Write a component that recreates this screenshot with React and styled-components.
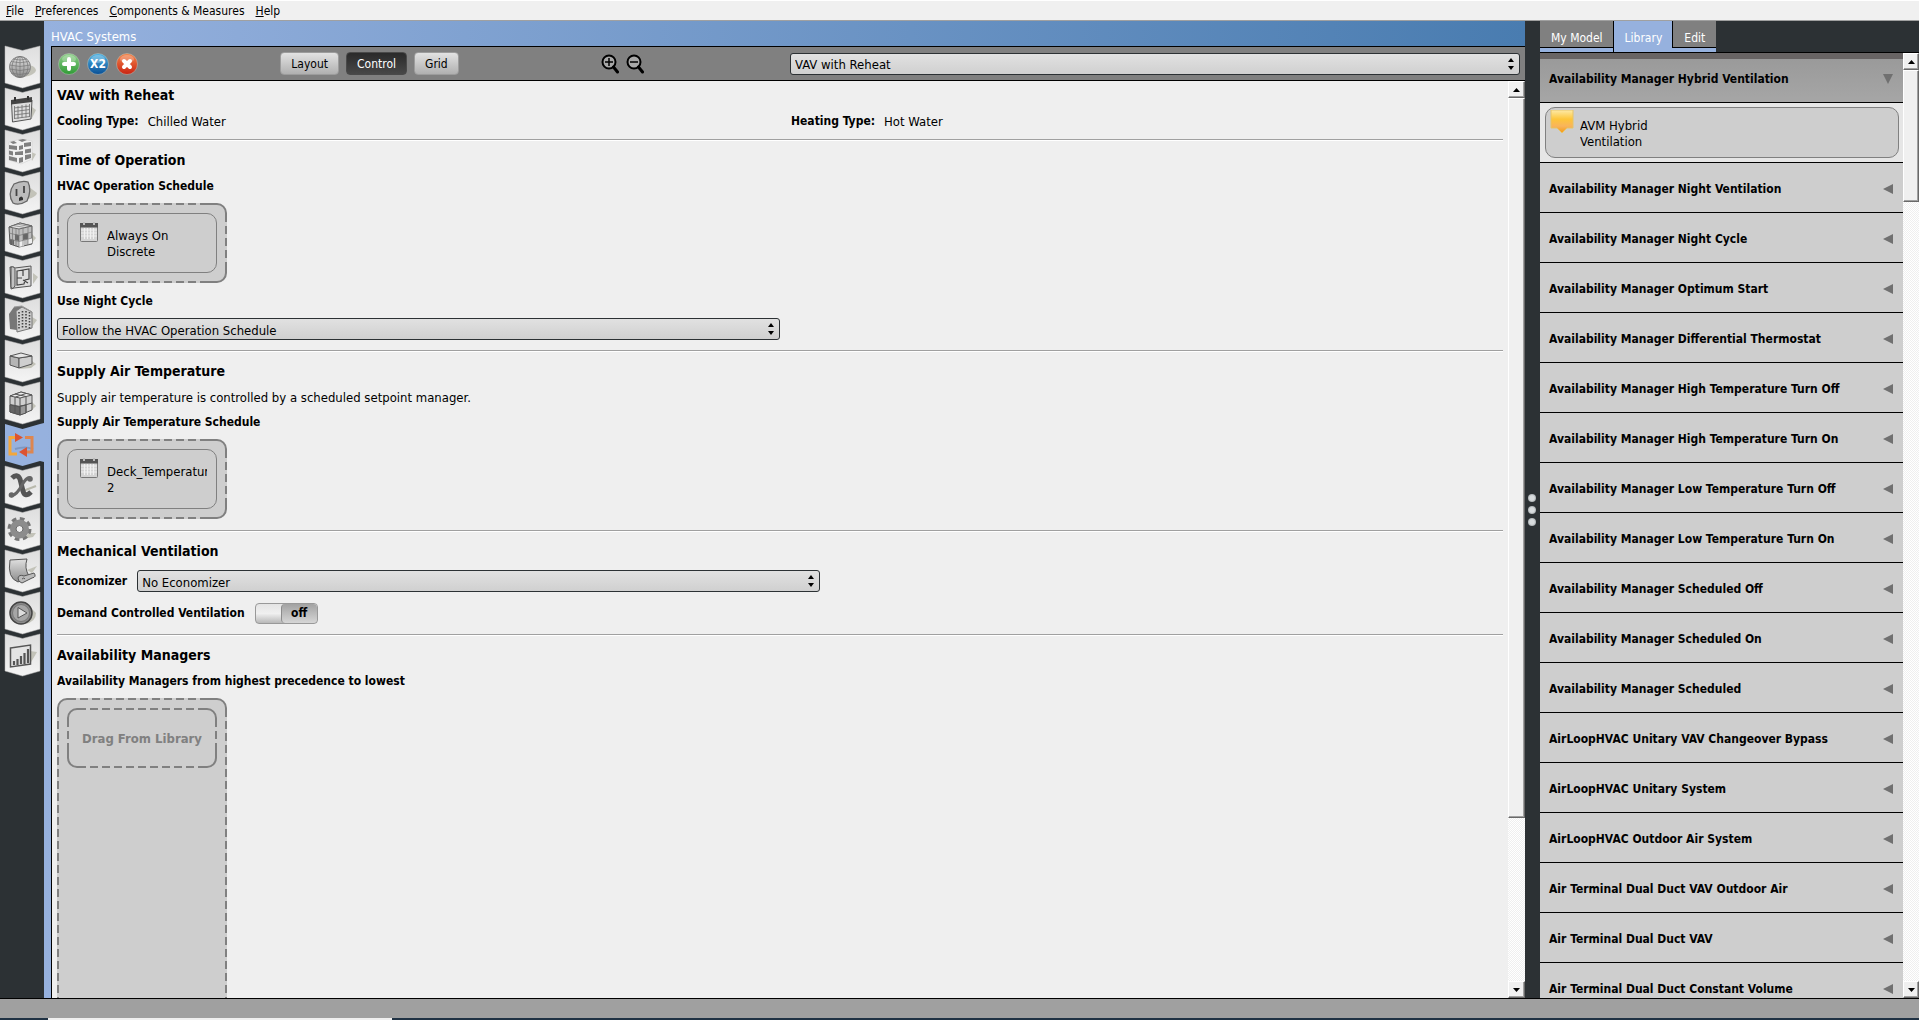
import React, { useState } from 'react';
import styled, { createGlobalStyle, css } from 'styled-components';

const GlobalStyle = createGlobalStyle`
  * {
    box-sizing: border-box;
  }

  body {
    margin: 0;
    background: #f0f0f0;
  }

  body, button, select, input {
    font-family: "DejaVu Sans Condensed", "DejaVu Sans", sans-serif;
    font-size: 12px;
    color: #000;
  }
`;

const Window = styled.div`
  height: 100vh;
  display: flex;
  flex-direction: column;
  overflow: hidden;
`;

const MenuBar = styled.nav`
  flex: none;
  height: 21px;
  display: flex;
  align-items: center;
  gap: 11px;
  padding: 0 6px;
  background: #f0f0f0;
  border-top: 1px solid #fff;
  border-bottom: 1px solid #a0a0a0;
`;

const MenuItem = styled.a`
  display: inline-block;
  color: #000;
  text-decoration: none;
  line-height: 16px;

  &::first-letter {
    text-decoration: underline;
  }
`;

const Workspace = styled.div`
  flex: 1;
  min-height: 0;
  display: flex;
  background: #2c3134;
  border-bottom: 1px solid #000;
`;

/* ---- left tabs ---- */

const Rail = styled.nav`
  flex: none;
  width: 44px;
  padding: 25px 0 0 5px;
  display: flex;
  flex-direction: column;
`;

const RailTab = styled.button`
  width: 39px;
  height: 42px;
  padding: 0;
  border: none;
  background: none;
  cursor: pointer;

  svg {
    display: block;
    overflow: visible;
  }
`;

/* ---- main panel ---- */

const Main = styled.main`
  flex: 1;
  min-width: 0;
  display: flex;
  flex-direction: column;
  padding-left: 7px;
  background: linear-gradient(90deg, #96b1de, #497cb0);
`;

const MainTitle = styled.h1`
  margin: 0;
  height: 25px;
  padding-top: 8px;
  font-size: 13px;
  font-weight: normal;
  line-height: 16px;
  color: #fff;
`;

const Frame = styled.div`
  flex: 1;
  min-height: 0;
  display: flex;
  flex-direction: column;
  border: 1px solid #000;
  border-width: 1px 0 0 1px;
`;

const Toolbar = styled.div`
  flex: none;
  height: 34px;
  display: grid;
  grid-template-columns: 1fr 1fr;
  align-items: center;
  gap: 2px;
  padding: 0 5px 0 6px;
  background: #808080;
  border-bottom: 1px solid #000;
`;

const ToolbarHalf = styled.div`
  display: flex;
  justify-content: space-between;
  padding-right: 144px;
`;

const ToolbarGroup = styled.div`
  display: flex;
  align-items: center;
  gap: 7px;
`;

const IconButton = styled.button`
  padding: 0;
  border: none;
  background: none;
  cursor: pointer;

  svg {
    display: block;
  }
`;

const ViewButton = styled.button`
  height: 23px;
  padding: 0 10px;
  border: 1px solid #9c9c9c;
  border-radius: 4px;
  background: linear-gradient(#e2e2e2, #b0b0b0);
  cursor: pointer;

  ${(props) => props.$active && css`
    color: #fff;
    border-color: #4a4a4a;
    background: linear-gradient(#2a2a2a, #484848);
  `}
`;

const SelectBox = styled.div`
  position: relative;
  flex: ${(props) => (props.$grow ? '1 1 0' : 'none')};
  width: ${(props) => props.$width || 'auto'};

  select {
    display: block;
    width: 100%;
    height: 22px;
    padding: 2px 20px 0 4px;
    font-size: 13px;
    appearance: none;
    border: 1px solid #2c3134;
    border-radius: 3px;
    background: linear-gradient(#e1e1e1, #d0d0d0);
  }

  svg {
    position: absolute;
    right: 6px;
    top: 5px;
    pointer-events: none;
  }
`;

const ScrollArea = styled.div`
  flex: 1;
  min-height: 0;
  display: flex;
  background: #efefef;
`;

const Content = styled.div`
  flex: 1;
  min-width: 0;
  overflow: hidden;
  padding: 0 5px;
`;

const Section = styled.section`
  display: flex;
  flex-direction: column;
  gap: 9px;
  padding: 5px 0 10px;

  & + & {
    border-top: 1px solid #a0a0a0;
    box-shadow: inset 0 1px #fff;
    padding-top: 11px;
  }
`;

const Heading = styled.h2`
  margin: 0;
  padding-top: 1px;
  font-size: 14px;
  line-height: 17px;
`;

const FieldLabel = styled.label`
  padding-top: 1px;
  font-weight: bold;
  line-height: 15px;
`;

const Text = styled.p`
  margin: 0;
  padding-top: 1px;
  font-size: 13px;
  line-height: 15px;
`;

const HalfColumns = styled.div`
  display: grid;
  grid-template-columns: 50% 1fr;
  column-gap: 11px;
  padding-top: 1px;
  line-height: 15px;
`;

const Pair = styled.div`
  display: flex;
  gap: 9px;

  span {
    font-size: 13px;
  }
`;

const FieldRow = styled.div`
  display: flex;
  align-items: center;
  gap: 10px;
  width: ${(props) => props.$width || 'auto'};
  height: ${(props) => props.$height}px;
`;

/* 2px outline with 8px dashes; the corners stay solid */
const dashed = css`
  position: relative;
  border: 2px solid #808080;

  &::after {
    content: '';
    position: absolute;
    inset: -2px;
    pointer-events: none;
    background:
      repeating-linear-gradient(90deg, #cecece 0 4px, transparent 4px 12px) 19px 0 / calc(100% - 38px) 2px no-repeat,
      repeating-linear-gradient(90deg, #cecece 0 4px, transparent 4px 12px) 19px 100% / calc(100% - 38px) 2px no-repeat,
      repeating-linear-gradient(#cecece 0 4px, transparent 4px 12px) 0 19px / 2px calc(100% - 38px) no-repeat,
      repeating-linear-gradient(#cecece 0 4px, transparent 4px 12px) 100% 19px / 2px calc(100% - 38px) no-repeat;
  }
`;

const DropZone = styled.div`
  ${dashed}
  width: 170px;
  min-height: ${(props) => (props.$tall ? 400 : 80)}px;
  margin-bottom: 1px;
  padding: 8px;
  border-radius: 10px;
  background: #cecece;
`;

const Card = styled.div`
  display: flex;
  height: 60px;
  padding: 8px 9px 0 12px;
  gap: 9px;
  border: 1px solid #808080;
  border-radius: 10px;
  background: #cecece;

  svg {
    flex: none;
  }
`;

const CardText = styled.span`
  flex: 1;
  overflow: hidden;
  padding-top: 6px;
  font-size: 13px;
  line-height: 16px;
`;

const EmptySlot = styled.div`
  ${dashed}
  display: flex;
  align-items: center;
  justify-content: center;
  height: 60px;
  border-radius: 10px;
  font-size: 13px;
  font-weight: bold;
  color: #808080;
`;

const Toggle = styled.label`
  position: relative;
  display: flex;
  justify-content: ${(props) => (props.$on ? 'flex-start' : 'flex-end')};
  width: 63px;
  height: 21px;
  border: 1px solid #999;
  border-radius: 4px;
  background: linear-gradient(#e4e4e4, #f0f0f0 50%, #b8b8b8);

  input {
    position: absolute;
    inset: 0;
    margin: 0;
    opacity: 0;
  }

  span {
    width: 36px;
    line-height: 18px;
    text-align: center;
    font-weight: bold;
    border-left: 1px solid #8c8c8c;
    border-radius: 4px;
    background: linear-gradient(#a2a2a2, #d6d6d6);
  }
`;

/* ---- scroll bars ---- */

const Bar = styled.div`
  flex: none;
  width: ${(props) => props.$width}px;
  display: flex;
  flex-direction: column;
  background: conic-gradient(#fff 25%, #efefef 0 50%, #fff 0 75%, #efefef 0) 0 0 / 2px 2px;
`;

const raised = css`
  border: 1px solid;
  border-color: #fff #696969 #696969 #fff;
  box-shadow: inset -1px -1px #a0a0a0;
  background: #f0f0f0;
`;

const BarButton = styled.button`
  ${raised}
  flex: none;
  height: 17px;
  padding: 0;
  display: flex;
  align-items: center;
  justify-content: center;
`;

const BarTrack = styled.div`
  flex: 1;
`;

const BarThumb = styled.div`
  ${raised}
  height: ${(props) => props.$size}%;
`;

/* ---- splitter and right panel ---- */

const Splitter = styled.div`
  flex: none;
  width: 15px;
  display: flex;
  flex-direction: column;
  align-items: center;
  justify-content: center;
  gap: 4px;
  padding-right: 1px;

  i {
    width: 8px;
    height: 8px;
    border-radius: 50%;
    background: radial-gradient(#d8dcde 40%, #7c8286);
  }
`;

const Side = styled.aside`
  flex: none;
  width: 379px;
  display: flex;
  flex-direction: column;
`;

const SideTabs = styled.div`
  flex: none;
  height: 32px;
  display: flex;
  border-bottom: 1px solid #000;
`;

const SideTab = styled.button`
  height: 31px;
  padding: 6px 11px 0;
  border: none;
  border-bottom: 4px solid #96b1de;
  background: ${(props) => (props.$active ? '#96b1de' : '#808080')};
  box-shadow: ${(props) => (props.$active ? 'inset -1px 0 #000, -1px 0 #000' : 'inset 0 -1px #000')};
  color: #fff;
`;

const List = styled.ul`
  flex: 1;
  min-width: 0;
  overflow: hidden;
  margin: 0;
  padding: 0;
  list-style: none;
  background: #cecece;
`;

const ListHeader = styled.button`
  width: 100%;
  height: 50px;
  display: flex;
  align-items: center;
  justify-content: space-between;
  padding: 3px 10px 0 9px;
  border: none;
  border-bottom: 1px solid #000;
  background: #cecece;
  font-weight: bold;
  text-align: left;

  ${(props) => props.$open && css`
    border-top: 6px solid #686464;
    background: linear-gradient(#9a9a9a, #a6a6a6);
    padding-top: 0;
    padding-bottom: 4px;
  `}
`;

const OpenBody = styled.div`
  height: 60px;
  padding: 4px 4px 5px 5px;
  background: #e6e6e6;
  border-bottom: 1px solid #000;

  ${Card} {
    height: 51px;
    padding: 2px 4px 0;
    gap: 6px;
  }

  ${CardText} {
    padding-top: 8px;
  }
`;

/* ---- bottom ---- */

const StatusBar = styled.footer`
  flex: none;
  height: 21px;
  background: #a0a0a0;
  border-bottom: 2px solid #203244;
`;

const TaskStrip = styled.div`
  width: 344px;
  height: 2px;
  margin: 19px 0 0 48px;
  background: #efefef;
`;

const Ink = ({ children, fill = 'none', width = 1 }) => (
  <g fill={fill} stroke="#555" strokeWidth={width} strokeLinejoin="round">{children}</g>
);

const Shade = ({ d }) => <path d={d} fill="#b9b9ac" opacity="0.8" />;

const icons = {
  Site: (
    <>
      <Shade d="M18 31 C26 30 31 27 31 24 C30 21 27 19 25 20 Z" />
      <circle cx="15" cy="21" r="10.5" fill="url(#metal)" stroke="#888" />
      <g fill="none" stroke="#777" strokeWidth="0.7">
        <ellipse cx="15" cy="21" rx="4" ry="10.5" />
        <ellipse cx="15" cy="21" rx="8" ry="10.5" />
        <path d="M15 10.5V31.5M6 15.5Q15 18 24 15.5M4.500 19Q15 22 25.500 19M4.500 23Q15 26 25.500 23M6 27Q15 30 24 27M8 13Q15 15 22 13" />
      </g>
    </>
  ),
  Schedules: (
    <>
      <Shade d="M27 19L31 22L27 30Z" />
      <path d="M6.500 14L27 12L26 31L7.500 34Z" fill="#ddd" stroke="#555" />
      <path d="M6 12L27 9V14L6 16.500Z" fill="#444" />
      <path d="M10 9v4M23 8v4" stroke="#333" strokeWidth="2" />
      <path d="M9 20L25 18M9 23.500L25 21.500M9 27L25 25M9 30.500L25 28.500M9.500 18v13M13 18v13M17 17v13M21 16.500v13M24.500 16v13" stroke="#777" strokeWidth="0.9" />
    </>
  ),
  Constructions: (
    <>
      <Shade d="M26 22L31 24L27 31Z" />
      <path d="M4 12L16 9L27 11V29L16 34L4 30Z" fill="#f2f2f2" stroke="#ccc" strokeWidth="0.5" />
      <g fill="#808080">
        <path d="M5 12l4-1 3 2-4 1zM13 10l5-1 4 1-5 2zM19 13l7-1v4l-7 1zM4 15l8 1v4l-8-1zM14 16l4-1v4l-4 1zM4 20.500l4 1v4l-4-1zM10 22l8-1v4l-8 0zM20 19.500l6-1v4l-6 1zM4 26l8 2v4l-8-2zM14 28l4-1v5l-4 1zM20 25l6-1v4l-6 2z" />
      </g>
    </>
  ),
  Loads: (
    <>
      <Shade d="M24 15L32 21Q31 25 23 27Z" />
      <path d="M9 12Q17 8 23 10Q27 18 22 29Q14 34 8 31Q2 22 9 12Z" fill="#bcbcbc" stroke="#666" strokeWidth="1.3" />
      <path d="M11.500 17v7M19 14v7" stroke="#444" strokeWidth="1.800" />
      <path d="M14 29v-3q2.500-3 4 0v2z" fill="#333" />
    </>
  ),
  'Space Types': (
    <>
      <Shade d="M26 19L31 24L26 30Z" />
      <path d="M4 13L15 9L27 12V30L14 33L5 30Z" fill="#bdbdbd" stroke="#555" />
      <path d="M4 13L14 15L27 12L15 9Z" fill="#e4e4e4" stroke="#666" />
      <path d="M18 20l5-1v6l-5 1zM5 25l4 1v5l-4-1zM10 20l4 1v6l-4-1z" fill="#666" />
      <path d="M23 25l4-1v5l-4 1zM14 27l5-1v6l-5 1z" fill="#eee" />
      <path d="M14 15V33M4 19L14 21.500L27 18M4 25L14 27.500L27 24M7.500 14v17M11 14.500v18M18 14v18M23 13v18M8 11.500l12 2M12 10l12 2.500" fill="none" stroke="#777" strokeWidth="0.7" />
    </>
  ),
  Geometry: (
    <>
      <Shade d="M28 17L33 21L28 28Z" />
      <path d="M5 11h3l2 1 16-2v20L9 32l-3 1z" fill="#ddd" stroke="#555" />
      <path d="M6 11q4-1 4 3v16q-3 4-4 1z" fill="#c2c2c2" stroke="#555" />
      <path d="M12 15L24 13V23L20 24L19 28L12 29ZM12 22h5M18 14v6M18 24l5 3" fill="none" stroke="#444" strokeWidth="1.200" />
    </>
  ),
  Facility: (
    <>
      <Shade d="M27 19L32 22L27 29Z" />
      <path d="M4 16L9 9L17 8L18 33L5 31Z" fill="#777" />
      <path d="M11 13L17 9L27 14V30L12 34Z" fill="#cfcfcf" stroke="#777" />
      <path d="M14 14v18M17.500 13v18M21 13v18M24.500 14v17" stroke="#444" strokeWidth="1.600" strokeDasharray="1.500 1.500" />
      <path d="M9 9L17 8L27 14" fill="none" stroke="#999" />
    </>
  ),
  Spaces: (
    <>
      <Shade d="M27 21L31 24L26 28L14 29Z" />
      <Ink fill="#b5b5b5">
        <path d="M5 16L14 18V28L5 25Z" />
        <path d="M14 18L27 16V24L14 28Z" fill="#cfcfcf" />
        <path d="M5 16L16 13L27 16L14 18Z" fill="#e6e6e6" />
      </Ink>
    </>
  ),
  'Thermal Zones': (
    <>
      <Shade d="M27 20L31 24L26 29Z" />
      <Ink fill="#cfcfcf">
        <path d="M5 14L16 10L27 13V28L15 33L5 30Z" />
        <path d="M5 14L15 16L27 13L16 10Z" fill="#ececec" />
        <path d="M5 23L15 25V33L5 30Z" fill="#666" />
        <path d="M15 24L21 23V31L15 33Z" fill="#999" />
        <path d="M15 16V33M10 15V31M21 14.500V31M5 22.500L15 24.500L27 21M10 12L21 14.500M10.500 15L21 11.500" fill="none" />
      </Ink>
    </>
  ),
  'HVAC Systems': (
    <>
      <path d="M10 25Q20 22 28 25" fill="none" stroke="#7e98c2" strokeWidth="2" />
      <path d="M12 30H5V13.500H11" fill="none" stroke="#f2a73c" strokeWidth="3" />
      <path d="M20 13.500H27V28H22" fill="none" stroke="#dd8650" strokeWidth="3" />
      <path d="M10 9L18 13.500L10 18ZM22 23L14 28L22 33Z" fill="#dc5330" />
    </>
  ),
  'Output Variables': (
    <>
      <path d="M18 25L31 20" stroke="#b9b9ac" strokeWidth="2" />
      <path d="M7 12Q12 7 15 13L18 25Q20 32 26 26" fill="none" stroke="#555" strokeWidth="5" />
      <path d="M26 12Q22 10 17 19Q12 29 6 30" fill="none" stroke="#666" strokeWidth="3" />
      <circle cx="25" cy="13" r="2.800" fill="#666" />
      <circle cx="6.500" cy="29" r="2.800" fill="#666" />
    </>
  ),
  'Simulation Settings': (
    <>
      <Shade d="M18 31L24 25L31 25L28 29Z" />
      <circle cx="14.500" cy="21" r="10" fill="none" stroke="#777" strokeWidth="4" strokeDasharray="4.500 3.354" />
      <circle cx="14.500" cy="21" r="6.500" fill="none" stroke="#8c8c8c" strokeWidth="6" />
      <circle cx="14.500" cy="21" r="3.500" fill="#f0f0f0" stroke="#666" />
    </>
  ),
  Measures: (
    <>
      <Shade d="M22 20L32 16L27 23Z" />
      <path d="M5 10L22 9Q19 18 24 26L13 32Q2 28 5 10Z" fill="url(#metal)" stroke="#555" />
      <path d="M13 28Q14 24 19 26L29 23Q32 27 27 28L17 33Q13 32 13 28ZM17 29q2-2 3 0" fill="#bbb" stroke="#555" />
    </>
  ),
  'Run Simulation': (
    <>
      <Shade d="M20 32Q31 30 31 21L27 17Z" />
      <circle cx="16" cy="21" r="11" fill="#8a8a8a" stroke="#444" strokeWidth="1.500" />
      <circle cx="16" cy="21" r="8.500" fill="#a6a6a6" stroke="#777" />
      <path d="M13 15.500L22 21L13 26Z" fill="#ddd" stroke="#555" />
    </>
  ),
  'Results Summary': (
    <>
      <Shade d="M25 17L32 18L25 30Z" />
      <path d="M5.500 14L25.500 11V30L5.500 33Z" fill="#e4e4e4" stroke="#555" strokeWidth="1.500" />
      <path d="M9 31v-4M12.500 31v-6M16 30v-8M19.500 30v-11M23 29v-14" stroke="#555" strokeWidth="2.200" />
    </>
  ),
};

const libraryGroups = [
  'Availability Manager Night Ventilation',
  'Availability Manager Night Cycle',
  'Availability Manager Optimum Start',
  'Availability Manager Differential Thermostat',
  'Availability Manager High Temperature Turn Off',
  'Availability Manager High Temperature Turn On',
  'Availability Manager Low Temperature Turn Off',
  'Availability Manager Low Temperature Turn On',
  'Availability Manager Scheduled Off',
  'Availability Manager Scheduled On',
  'Availability Manager Scheduled',
  'AirLoopHVAC Unitary VAV Changeover Bypass',
  'AirLoopHVAC Unitary System',
  'AirLoopHVAC Outdoor Air System',
  'Air Terminal Dual Duct VAV Outdoor Air',
  'Air Terminal Dual Duct VAV',
  'Air Terminal Dual Duct Constant Volume',
];

function TabIcon({ name, active }) {
  return (
    <svg width="35" height="42" viewBox="0 0 35 42">
      {active
        ? <path d="M0 0L17.500 5L35 0L39 -1V38L35 37L17.500 42L0 37Z" fill="#96b1de" />
        : <path d="M0 0L17.500 4.500L35 0V37L17.500 42L0 37Z" fill="url(#paper)" stroke="#b4b4b4" strokeWidth="0.5" />}
      {icons[name]}
    </svg>
  );
}

function RoundIcon({ kind }) {
  return (
    <svg width="22" height="22" viewBox="0 0 22 22">
      <circle cx="11" cy="11" r="10.500" fill={`url(#${kind})`} stroke="#b9c4bb" strokeOpacity="0.5" />
      <ellipse cx="11" cy="6" rx="7" ry="4" fill="#fff" opacity="0.25" />
      {kind === 'add' && <path d="M11 6v10M6 11h10" stroke="#fff" strokeWidth="4" strokeLinecap="round" />}
      {kind === 'remove' && <path d="M8 8l6 6M14 8l-6 6" stroke="#fff" strokeWidth="4" strokeLinecap="round" />}
      {kind === 'copy' && (
        <text x="11" y="15" textAnchor="middle" fontSize="12" fontWeight="bold" fill="#fff">X2</text>
      )}
    </svg>
  );
}

function Magnifier({ plus }) {
  return (
    <svg width="18" height="20" viewBox="0 0 18 20">
      <circle cx="8" cy="8" r="6.500" fill="#a8a8a8" stroke="#000" strokeWidth="2" />
      <path d="M12.500 13L16.500 18" stroke="#000" strokeWidth="3" strokeLinecap="round" />
      <path d={plus ? 'M4 8h8M8 4v8' : 'M4 8h8'} stroke="#000" strokeWidth="1.500" />
    </svg>
  );
}

function CalendarIcon() {
  return (
    <svg width="18" height="20" viewBox="0 0 18 20">
      <rect x="0.500" y="1.500" width="17" height="18" rx="1" fill="#d4d4d4" stroke="#777" />
      <path d="M1 8h16M1 11h16M1 14h16M4.500 6v11M7.500 6v11M10.500 6v11M13.500 6v11" stroke="#f0f0f0" />
      <path d="M0 1h18v4.500H0z" fill="#555" />
      <path d="M4 0v3M14 0v3" stroke="#bbb" strokeWidth="2" />
    </svg>
  );
}

function ManagerIcon() {
  return (
    <svg width="24" height="24" viewBox="0 0 24 24">
      <path d="M1 0H23V18H17L12 23L7 18H1Z" fill="url(#amber)" stroke="#e5c46a" />
    </svg>
  );
}

function Select({ id, label, options, grow, width }) {
  return (
    <SelectBox $grow={grow} $width={width}>
      <select id={id} aria-label={label}>
        {options.map((option) => <option key={option}>{option}</option>)}
      </select>
      <svg width="6" height="12" viewBox="0 0 6 12">
        <path d="M3 0L6 4H0ZM3 12L0 8H6Z" />
      </svg>
    </SelectBox>
  );
}

function ScrollBar({ width, size }) {
  return (
    <Bar $width={width}>
      <BarButton aria-label="Scroll up">
        <svg width="7" height="4" viewBox="0 0 7 4"><path d="M0 4L3.500 0L7 4Z" /></svg>
      </BarButton>
      <BarTrack><BarThumb $size={size} /></BarTrack>
      <BarButton aria-label="Scroll down">
        <svg width="7" height="4" viewBox="0 0 7 4"><path d="M0 0L3.500 4L7 0Z" /></svg>
      </BarButton>
    </Bar>
  );
}

function ScheduleDrop({ name }) {
  return (
    <DropZone>
      <Card>
        <CalendarIcon />
        <CardText>{name}</CardText>
      </Card>
    </DropZone>
  );
}

const GradientDefs = styled.svg`
  position: absolute;
  width: 0;
  height: 0;
`;

function Gradients() {
  const stops = {
    paper: ['#dedede', '#f4f4f4'],
    metal: ['#e0e0e0', '#8c8c8c'],
    add: ['#8fd08a', '#2f9a35'],
    copy: ['#4fb4e4', '#0a4f96'],
    remove: ['#f4854a', '#c92312'],
  };
  return (
    <GradientDefs aria-hidden="true">
      <defs>
        {Object.keys(stops).map((id) => (
          <linearGradient key={id} id={id} x1="0" y1="0" x2="0" y2="1">
            <stop offset="0" stopColor={stops[id][0]} />
            <stop offset="1" stopColor={stops[id][1]} />
          </linearGradient>
        ))}
        <linearGradient id="amber" x1="0" y1="0" x2="0" y2="1">
          <stop offset="0" stopColor="#fdeaa8" />
          <stop offset="0.4" stopColor="#fdc63a" />
          <stop offset="0.7" stopColor="#f9b45c" />
          <stop offset="1" stopColor="#f59a10" />
        </linearGradient>
      </defs>
    </GradientDefs>
  );
}

function App() {
  const [tab, setTab] = useState('HVAC Systems');
  const [view, setView] = useState('Control');
  const [sideTab, setSideTab] = useState('Library');
  const [dcv, setDcv] = useState(false);

  return (
    <Window>
      <GlobalStyle />
      <Gradients />

      <MenuBar>
        {['File', 'Preferences', 'Components & Measures', 'Help'].map((item) => (
          <MenuItem key={item} href="#">{item}</MenuItem>
        ))}
      </MenuBar>

      <Workspace>
        <Rail>
          {Object.keys(icons).map((name) => (
            <RailTab key={name} aria-label={name} onClick={() => setTab(name)}>
              <TabIcon name={name} active={tab === name} />
            </RailTab>
          ))}
        </Rail>

        <Main>
          <MainTitle>HVAC Systems</MainTitle>
          <Frame>
            <Toolbar>
              <ToolbarHalf>
                <ToolbarGroup>
                  <IconButton aria-label="Add"><RoundIcon kind="add" /></IconButton>
                  <IconButton aria-label="Duplicate"><RoundIcon kind="copy" /></IconButton>
                  <IconButton aria-label="Remove"><RoundIcon kind="remove" /></IconButton>
                </ToolbarGroup>
                <ToolbarGroup>
                  {['Layout', 'Control', 'Grid'].map((name) => (
                    <ViewButton key={name} $active={view === name} onClick={() => setView(name)}>
                      {name}
                    </ViewButton>
                  ))}
                </ToolbarGroup>
                <ToolbarGroup>
                  <IconButton aria-label="Zoom in"><Magnifier plus /></IconButton>
                  <IconButton aria-label="Zoom out"><Magnifier /></IconButton>
                </ToolbarGroup>
              </ToolbarHalf>
              <Select label="System" options={['VAV with Reheat']} />
            </Toolbar>

            <ScrollArea>
              <Content>
                <Section>
                  <Heading>VAV with Reheat</Heading>
                  <HalfColumns>
                    <Pair><b>Cooling Type:</b><span>Chilled Water</span></Pair>
                    <Pair><b>Heating Type:</b><span>Hot Water</span></Pair>
                  </HalfColumns>
                </Section>

                <Section>
                  <Heading>Time of Operation</Heading>
                  <FieldLabel as="div">HVAC Operation Schedule</FieldLabel>
                  <ScheduleDrop name="Always On Discrete" />
                  <FieldLabel htmlFor="night-cycle">Use Night Cycle</FieldLabel>
                  <Select id="night-cycle" width="50%" options={['Follow the HVAC Operation Schedule']} />
                </Section>

                <Section>
                  <Heading>Supply Air Temperature</Heading>
                  <Text>Supply air temperature is controlled by a scheduled setpoint manager.</Text>
                  <FieldLabel as="div">Supply Air Temperature Schedule</FieldLabel>
                  <ScheduleDrop name="Deck_Temperature 2" />
                </Section>

                <Section>
                  <Heading>Mechanical Ventilation</Heading>
                  <FieldRow $width="calc(50% + 40px)" $height={24}>
                    <FieldLabel htmlFor="economizer">Economizer</FieldLabel>
                    <Select id="economizer" grow options={['No Economizer']} />
                  </FieldRow>
                  <FieldRow $height={22}>
                    <FieldLabel htmlFor="dcv">Demand Controlled Ventilation</FieldLabel>
                    <Toggle $on={dcv}>
                      <input id="dcv" type="checkbox" checked={dcv} onChange={(e) => setDcv(e.target.checked)} />
                      <span>{dcv ? 'on' : 'off'}</span>
                    </Toggle>
                  </FieldRow>
                </Section>

                <Section>
                  <Heading>Availability Managers</Heading>
                  <FieldLabel as="div">Availability Managers from highest precedence to lowest</FieldLabel>
                  <DropZone $tall>
                    <EmptySlot>Drag From Library</EmptySlot>
                  </DropZone>
                </Section>
              </Content>
              <ScrollBar width={17} size={81.5} />
            </ScrollArea>
          </Frame>
        </Main>

        <Splitter><i /><i /><i /></Splitter>

        <Side>
          <SideTabs>
            {['My Model', 'Library', 'Edit'].map((name) => (
              <SideTab key={name} $active={sideTab === name} onClick={() => setSideTab(name)}>
                {name}
              </SideTab>
            ))}
          </SideTabs>
          <ScrollArea>
            <List>
              <li>
                <ListHeader $open>
                  Availability Manager Hybrid Ventilation
                  <svg width="10" height="10" viewBox="0 0 10 10"><path d="M0 0H10L5 10Z" fill="#707070" /></svg>
                </ListHeader>
                <OpenBody>
                  <Card>
                    <ManagerIcon />
                    <CardText>AVM Hybrid<br />Ventilation</CardText>
                  </Card>
                </OpenBody>
              </li>
              {libraryGroups.map((name) => (
                <li key={name}>
                  <ListHeader>
                    {name}
                    <svg width="10" height="10" viewBox="0 0 10 10"><path d="M10 0V10L0 5Z" fill="#707070" /></svg>
                  </ListHeader>
                </li>
              ))}
            </List>
            <ScrollBar width={16} size={14.5} />
          </ScrollArea>
        </Side>
      </Workspace>

      <StatusBar><TaskStrip /></StatusBar>
    </Window>
  );
}

export default App;
